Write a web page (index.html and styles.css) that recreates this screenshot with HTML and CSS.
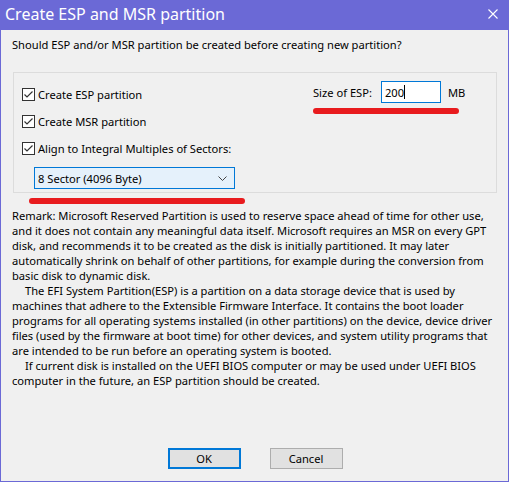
FILE: index.html
```html
<!DOCTYPE html>
<html>
<head>
<meta charset="utf-8">
<title>Create ESP and MSR partition</title>
<link rel="stylesheet" href="styles.css">
</head>
<body>
<div class="window">
  <div class="titlebar">
    <span class="title">Create ESP and MSR partition</span>
    <svg class="close" width="10" height="10" viewBox="0 0 10 10"><path d="M0.5 0.5L9.5 9.5M9.5 0.5L0.5 9.5" stroke="#fff" stroke-width="1.1" fill="none"/></svg>
  </div>
  <div class="main">
    <p class="question">Should ESP and/or MSR partition be created before creating new partition?</p>
    <div class="group">
      <div class="options">
        <label class="check"><svg class="box" width="13" height="13" viewBox="0 0 13 13"><rect x="0.5" y="0.5" width="12" height="12" fill="#fff" stroke="#333"/><path d="M2.5 6.5L5 9L10.5 3.5" stroke="#333" stroke-width="1.2" fill="none"/></svg>Create ESP partition</label>
        <label class="check"><svg class="box" width="13" height="13" viewBox="0 0 13 13"><rect x="0.5" y="0.5" width="12" height="12" fill="#fff" stroke="#333"/><path d="M2.5 6.5L5 9L10.5 3.5" stroke="#333" stroke-width="1.2" fill="none"/></svg>Create MSR partition</label>
        <label class="check"><svg class="box" width="13" height="13" viewBox="0 0 13 13"><rect x="0.5" y="0.5" width="12" height="12" fill="#fff" stroke="#333"/><path d="M2.5 6.5L5 9L10.5 3.5" stroke="#333" stroke-width="1.2" fill="none"/></svg>Align to Integral Multiples of Sectors:</label>
        <div class="combo">
          <span>8 Sector (4096 Byte)</span>
          <svg class="chevron" width="9" height="5" viewBox="0 0 9 5"><path d="M0.5 0.5L4.5 4.5L8.5 0.5" stroke="#444" stroke-width="1" fill="none"/></svg>
        </div>
      </div>
      <div class="size">
        <span class="size-label">Size of ESP:</span>
        <div class="input">200<span class="caret"></span></div>
        <span class="unit">MB</span>
      </div>
    </div>
    <div class="remark">
      <p>Remark: Microsoft Reserved Partition is used to reserve space ahead of time for other use,<br>and it does not contain any meaningful data itself. Microsoft requires an MSR on every GPT<br>disk, and recommends it to be created as the disk is initially partitioned. It may later<br>automatically shrink on behalf of other partitions, for example during the conversion from<br>basic disk to dynamic disk.</p>
      <p class="indent">The EFI System Partition(ESP) is a partition on a data storage device that is used by<br>machines that adhere to the Extensible Firmware Interface. It contains the boot loader<br>programs for all operating systems installed (in other partitions) on the device, device driver<br>files (used by the firmware at boot time) for other devices, and system utility programs that<br>are intended to be run before an operating system is booted.</p>
      <p class="indent">If current disk is installed on the UEFI BIOS computer or may be used under UEFI BIOS<br>computer in the future, an ESP partition should be created.</p>
    </div>
    <div class="buttons">
      <button class="btn btn-default">OK</button>
      <button class="btn">Cancel</button>
    </div>
  </div>
  <div class="mark mark-size"></div>
  <div class="mark mark-combo"></div>
</div>
</body>
</html>
```
FILE: styles.css
```css
* { box-sizing: border-box; }
html, body { margin: 0; padding: 0; }
body {
  width: 509px;
  height: 482px;
  overflow: hidden;
  background: #f0f0f0;
  font-family: "Noto Sans", "Open Sans", sans-serif;
  font-size: 11.15px;
  color: #000;
}
p { margin: 0; }
.window {
  position: relative;
  width: 509px;
  height: 482px;
  display: flex;
  flex-direction: column;
  background: #f0f0f0;
}
.titlebar {
  height: 30px;
  flex: none;
  background: #6b69d6;
  color: #fff;
  display: flex;
  align-items: center;
  justify-content: space-between;
  padding: 0 11px 3px 5px;
}
.title {
  font-size: 16px;
  line-height: 20px;
}
.close { display: block; }
.main {
  flex: 1;
  display: flex;
  flex-direction: column;
  border: 1px solid #6b69d6;
  border-top: none;
  padding: 0 10px 12px 11px;
}
.question {
  margin-top: 7px;
  line-height: 15px;
}
.group {
  margin-top: 20px;
  margin-left: 1px;
  width: 484px;
  height: 121px;
  border: 1px solid #dcdcdc;
  padding: 15px 0 0 8px;
  display: grid;
  grid-template-columns: 291px auto;
}
.options {
  display: flex;
  flex-direction: column;
  gap: 14px;
}
.check {
  display: flex;
  align-items: center;
  height: 13px;
  gap: 3px;
  white-space: nowrap;
}
.box { display: block; flex: none; }
.combo {
  margin-top: -2px;
  margin-left: 12px;
  width: 201px;
  height: 22px;
  border: 1px solid #0078d7;
  background: #e5f1fb;
  display: flex;
  align-items: center;
  justify-content: space-between;
  padding: 0 7px 0 3px;
}
.chevron { display: block; }
.size {
  margin-top: -7px;
  display: flex;
  align-items: center;
  height: 22px;
  white-space: nowrap;
}
.size-label { width: 68px; }
.input {
  width: 60px;
  height: 22px;
  border: 1px solid #0078d7;
  background: #fff;
  padding-left: 3px;
  display: flex;
  align-items: center;
}
.caret {
  display: inline-block;
  width: 1px;
  height: 14px;
  background: #000;
}
.unit { margin-left: 7px; }
.remark {
  margin-top: 15px;
  line-height: 15px;
  white-space: nowrap;
}
.indent { text-indent: 13px; }
.buttons {
  margin-top: auto;
  display: flex;
  justify-content: center;
  gap: 29px;
}
.btn {
  width: 73px;
  height: 21px;
  padding: 0;
  background: #e1e1e1;
  border: 1px solid #adadad;
  font-family: inherit;
  font-size: 11.15px;
  color: #000;
}
.btn-default { border: 2px solid #0078d7; }
.mark {
  position: absolute;
  height: 6px;
  border-radius: 3px;
  background: #e81b1e;
}
.mark-size { left: 313px; top: 108px; width: 146px; }
.mark-combo { left: 29px; top: 198px; width: 216px; }
```
